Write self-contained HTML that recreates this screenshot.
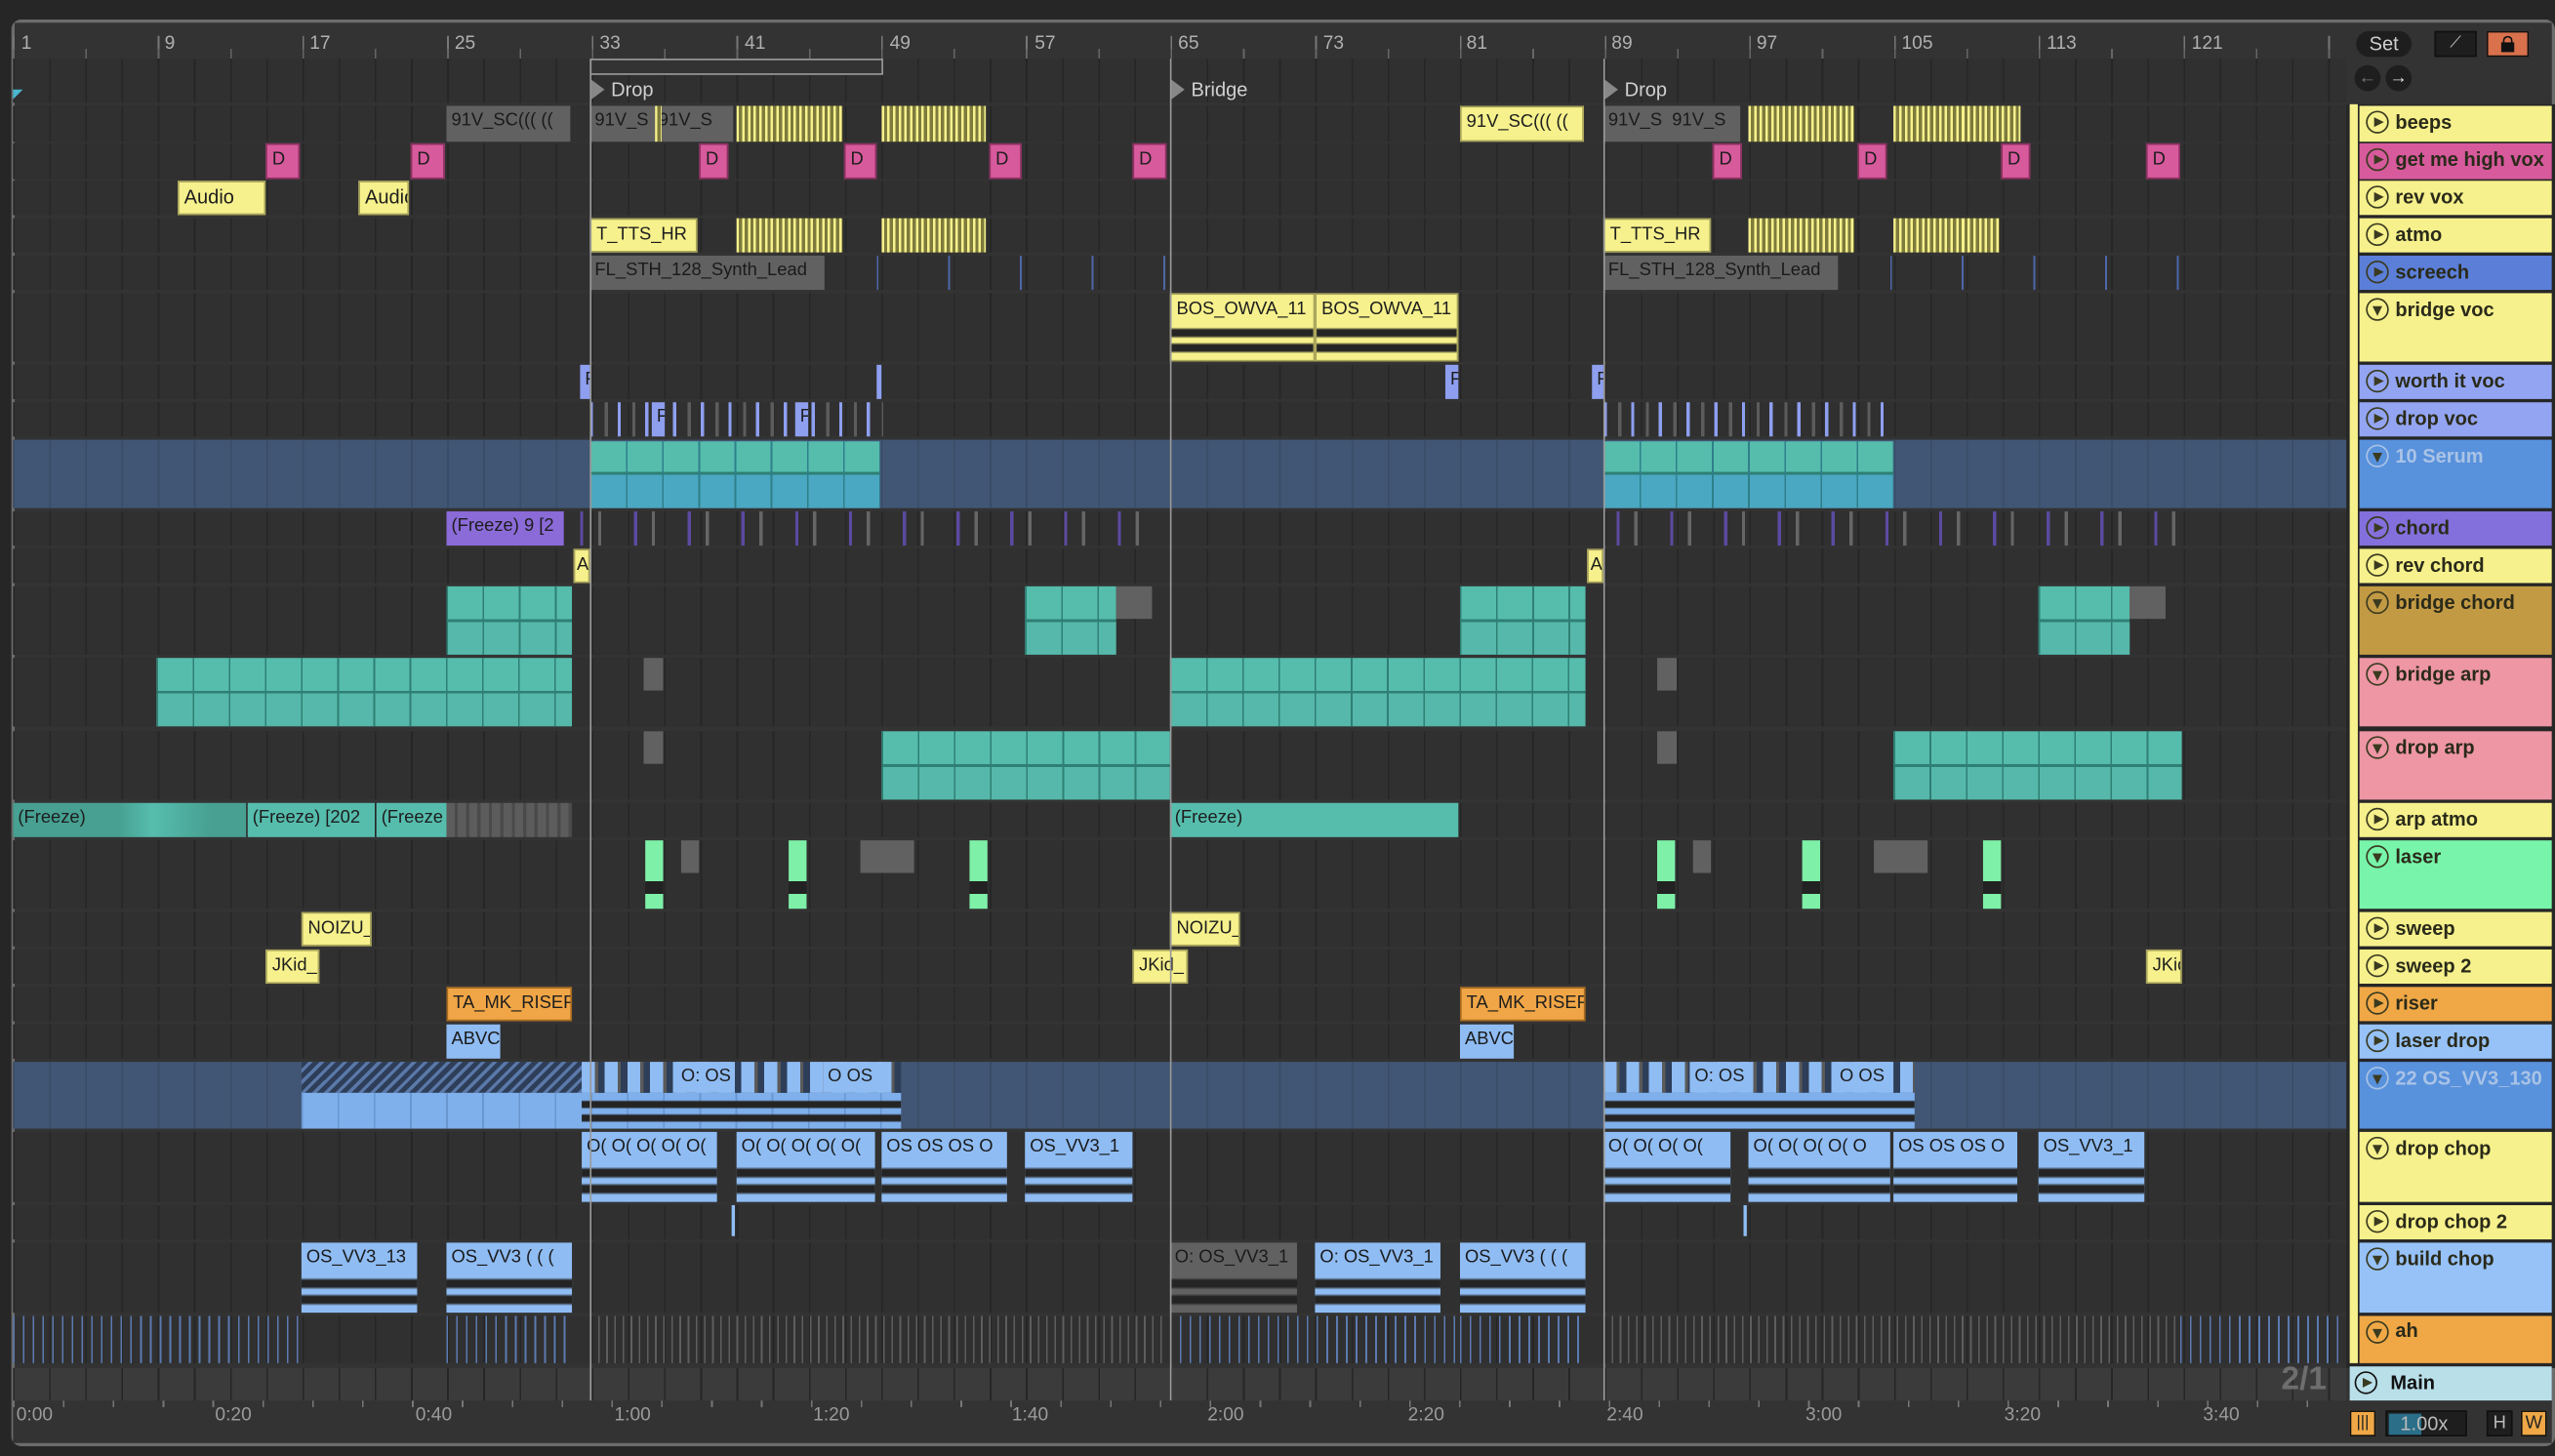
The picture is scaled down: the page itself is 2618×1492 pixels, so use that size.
<!DOCTYPE html>
<html><head><meta charset="utf-8">
<style>
html,body{margin:0;padding:0;background:#262626;width:2618px;height:1492px;overflow:hidden}
#w{position:absolute;left:0;top:0;width:1568px;height:894px;transform:scale(1.66964,1.66890);transform-origin:0 0;font-family:"Liberation Sans",sans-serif;background:#262626}
#w div{position:absolute;box-sizing:border-box}
.ln{left:8px;width:1432px;background-color:#303030;background-image:repeating-linear-gradient(90deg,#262626 0 1px,transparent 1px 22.2px)}
.grp{background-color:#415674!important;background-image:repeating-linear-gradient(90deg,#394c68 0 1px,transparent 1px 22.2px)!important}
.k{overflow:hidden;white-space:nowrap;font-size:11px;color:#1d1d1d;padding-left:3px;line-height:19px}
.y{background:#f6f18c;border:1px solid #a8a35a}
.g{background:#616161;color:#1a1a1a}
.p{background:#d75a9c;border:1px solid #8a3060}
.st{background:repeating-linear-gradient(90deg,#f6f18c 0 1.5px,#7d7a3c 1.5px 3.5px)}
.tl2{background-image:repeating-linear-gradient(90deg,#2f7f74 0 1px,transparent 1px 22.2px),linear-gradient(#56bdad 0 48%,#2f7f74 48% 52%,#55b8aa 52%)}
.tlb{background-image:repeating-linear-gradient(90deg,#2f7f8a 0 1px,transparent 1px 22.2px),linear-gradient(#56bdad 0 46%,#2f7f74 46% 50%,#4aa8c2 50%)}
.lb{background:#8fbcf3;color:#1a1a1a}
.wv{background-image:linear-gradient(transparent 0 50%,#242424 54% 63%,transparent 67% 73%,#242424 77% 86%,transparent 90%)}
.lab{left:1448px;width:118px;font-size:12px;font-weight:bold;color:#2a2a1a;padding-left:22px;line-height:21px}
.lab i{position:absolute;left:4px;top:3px;width:14px;height:14px;border:1.5px solid #3a3a20;border-radius:50%;box-sizing:border-box}
.lab i:after{content:"";position:absolute;left:4px;top:2.5px;border-left:6px solid #3a3a20;border-top:3.5px solid transparent;border-bottom:3.5px solid transparent}
.lab i.d:after{left:2.5px;top:4px;border-top:6px solid #3a3a20;border-left:3.5px solid transparent;border-right:3.5px solid transparent;border-bottom:0}
.rn{font-size:11.5px;color:#b0b0b0;top:21px}
.tm{font-size:11.5px;color:#9a9a9a;top:863px}
.vl{width:1px;background:#9a9a9a;top:36px;height:824px}
</style></head><body><div id="w">
<div style="left:7px;top:12px;width:1561px;height:876px;border:2px solid #6c6c6c;border-radius:6px;background:#333"></div>
<div style="left:9px;top:14px;width:1430px;height:22px;background:#333"></div>
<div style="left:8px;top:22px;width:1432px;height:14px;background-image:repeating-linear-gradient(90deg,#777 0 1px,transparent 1px 88.8px)"></div>
<div style="left:8px;top:30px;width:1432px;height:6px;background-image:repeating-linear-gradient(90deg,#666 0 1px,transparent 1px 44.4px)"></div>
<div class="rn" style="left:13px">1</div><div class="rn" style="left:101px">9</div><div class="rn" style="left:190px">17</div><div class="rn" style="left:279px">25</div><div class="rn" style="left:368px">33</div><div class="rn" style="left:457px">41</div><div class="rn" style="left:546px">49</div><div class="rn" style="left:635px">57</div><div class="rn" style="left:723px">65</div><div class="rn" style="left:812px">73</div><div class="rn" style="left:900px">81</div><div class="rn" style="left:989px">89</div><div class="rn" style="left:1078px">97</div><div class="rn" style="left:1167px">105</div><div class="rn" style="left:1256px">113</div><div class="rn" style="left:1345px">121</div>
<div class="ln" style="top:36px;height:27px"></div>
<div style="left:8px;top:55px;border-left:6px solid #4ab8d0;border-bottom:6px solid transparent;width:0;height:0"></div>
<div style="left:362px;top:36px;width:180px;height:10px;border:1px solid #999;background:#333"></div>
<div style="left:362px;top:48px;font-size:12px;color:#d0d0d0;padding-left:13px">Drop</div>
<div style="left:718px;top:48px;font-size:12px;color:#d0d0d0;padding-left:13px">Bridge</div>
<div style="left:984px;top:48px;font-size:12px;color:#d0d0d0;padding-left:13px">Drop</div>
<div style="left:363px;top:49px;border-left:8px solid #888;border-top:6px solid transparent;border-bottom:6px solid transparent"></div>
<div style="left:719px;top:49px;border-left:8px solid #888;border-top:6px solid transparent;border-bottom:6px solid transparent"></div>
<div style="left:985px;top:49px;border-left:8px solid #888;border-top:6px solid transparent;border-bottom:6px solid transparent"></div>

<div class="ln" style="top:65px;height:22px"></div>
<div class="ln" style="top:88px;height:22px"></div>
<div class="ln" style="top:111px;height:21px"></div>
<div class="ln" style="top:134px;height:21px"></div>
<div class="ln" style="top:157px;height:21px"></div>
<div class="ln" style="top:180px;height:42px"></div>
<div class="ln" style="top:224px;height:21px"></div>
<div class="ln" style="top:247px;height:21px"></div>
<div class="ln grp" style="top:270px;height:42px"></div>
<div class="ln" style="top:314px;height:21px"></div>
<div class="ln" style="top:337px;height:21px"></div>
<div class="ln" style="top:360px;height:42px"></div>
<div class="ln" style="top:404px;height:42px"></div>
<div class="ln" style="top:449px;height:42px"></div>
<div class="ln" style="top:493px;height:21px"></div>
<div class="ln" style="top:516px;height:42px"></div>
<div class="ln" style="top:560px;height:21px"></div>
<div class="ln" style="top:583px;height:21px"></div>
<div class="ln" style="top:606px;height:21px"></div>
<div class="ln" style="top:629px;height:21px"></div>
<div class="ln grp" style="top:652px;height:41px"></div>
<div class="ln" style="top:695px;height:43px"></div>
<div class="ln" style="top:740px;height:21px"></div>
<div class="ln" style="top:763px;height:43px"></div>
<div class="ln" style="top:808px;height:29px"></div>
<div class="ln" style="top:840px;height:20px;background-color:#3b3b3b"></div>
<div style="left:1400px;top:836px;font-size:20px;font-weight:bold;color:#6e6e6e">2/1</div>

<div class="k g" style="left:274px;top:65px;width:76px;height:22px">91V_SC((( ((</div>
<div class="k g" style="left:362px;top:65px;width:88px;height:22px">91V_S&nbsp;&nbsp;91V_S</div>
<div class="st" style="left:402px;top:65px;width:4px;height:22px"></div>
<div class="st" style="left:452px;top:65px;width:65px;height:22px"></div>
<div class="st" style="left:541px;top:65px;width:64px;height:22px"></div>
<div class="k y" style="left:896px;top:65px;width:76px;height:22px">91V_SC((( ((</div>
<div class="k g" style="left:984px;top:65px;width:84px;height:22px">91V_S&nbsp;&nbsp;91V_S</div>
<div class="st" style="left:1073px;top:65px;width:65px;height:22px"></div>
<div class="st" style="left:1162px;top:65px;width:78px;height:22px"></div>
<div class="k p" style="left:163px;top:88px;width:21px;height:22px">D</div>
<div class="k p" style="left:252px;top:88px;width:21px;height:22px">D</div>
<div class="k p" style="left:429px;top:88px;width:18px;height:22px">D</div>
<div class="k p" style="left:518px;top:88px;width:20px;height:22px">D</div>
<div class="k p" style="left:607px;top:88px;width:20px;height:22px">D</div>
<div class="k p" style="left:695px;top:88px;width:21px;height:22px">D</div>
<div class="k p" style="left:1051px;top:88px;width:18px;height:22px">D</div>
<div class="k p" style="left:1140px;top:88px;width:18px;height:22px">D</div>
<div class="k p" style="left:1228px;top:88px;width:18px;height:22px">D</div>
<div class="k p" style="left:1317px;top:88px;width:21px;height:22px">D</div>
<div class="k y" style="left:109px;top:111px;width:54px;height:21px;font-size:12px">Audio</div>
<div class="k y" style="left:220px;top:111px;width:31px;height:21px;font-size:12px">Audio</div>
<div class="k y" style="left:362px;top:134px;width:66px;height:21px">T_TTS_HR</div>
<div class="st" style="left:452px;top:134px;width:65px;height:21px"></div>
<div class="st" style="left:541px;top:134px;width:64px;height:21px"></div>
<div class="k y" style="left:984px;top:134px;width:66px;height:21px">T_TTS_HR</div>
<div class="st" style="left:1073px;top:134px;width:65px;height:21px"></div>
<div class="st" style="left:1162px;top:134px;width:65px;height:21px"></div>
<div class="k g" style="left:362px;top:157px;width:144px;height:21px">FL_STH_128_Synth_Lead</div>
<div style="left:508px;top:157px;width:208px;height:21px;background-image:repeating-linear-gradient(90deg,transparent 0 30px,#4d66a8 30px 31px,transparent 31px 44px)"></div>
<div class="k g" style="left:984px;top:157px;width:144px;height:21px">FL_STH_128_Synth_Lead</div>
<div style="left:1130px;top:157px;width:208px;height:21px;background-image:repeating-linear-gradient(90deg,transparent 0 30px,#4d66a8 30px 31px,transparent 31px 44px)"></div>
<div class="k y wv" style="left:718px;top:180px;width:89px;height:42px">BOS_OWVA_11</div>
<div class="k y wv" style="left:807px;top:180px;width:88px;height:42px">BOS_OWVA_11</div>
<div class="k" style="left:356px;top:224px;width:6px;height:21px;background:#8e9ff0">F</div>
<div style="left:538px;top:224px;width:3px;height:21px;background:#8e9ff0"></div>
<div class="k" style="left:887px;top:224px;width:8px;height:21px;background:#8e9ff0">F</div>
<div class="k" style="left:977px;top:224px;width:7px;height:21px;background:#8e9ff0">F</div>
<div style="left:362px;top:247px;width:180px;height:21px;background-image:repeating-linear-gradient(90deg,#8e9ff0 0 2px,transparent 2px 9px,#5c5c5c 9px 11px,transparent 11px 17px)"></div>
<div class="k" style="left:400px;top:247px;width:8px;height:21px;background:#8e9ff0">F</div>
<div class="k" style="left:488px;top:247px;width:8px;height:21px;background:#8e9ff0">F</div>
<div style="left:984px;top:247px;width:176px;height:21px;background-image:repeating-linear-gradient(90deg,#8e9ff0 0 2px,transparent 2px 9px,#5c5c5c 9px 11px,transparent 11px 17px)"></div>
<div class="tlb" style="left:362px;top:271px;width:178px;height:41px"></div>
<div class="tlb" style="left:984px;top:271px;width:178px;height:41px"></div>
<div class="k" style="left:274px;top:314px;width:72px;height:21px;background:#8b6bd8">(Freeze) 9 [2</div>
<div style="left:348px;top:314px;width:368px;height:21px;background-image:repeating-linear-gradient(90deg,transparent 0 8px,#5b4aa0 8px 10px,transparent 10px 19px,#666 19px 21px,transparent 21px 33px)"></div>
<div style="left:984px;top:314px;width:354px;height:21px;background-image:repeating-linear-gradient(90deg,transparent 0 8px,#5b4aa0 8px 10px,transparent 10px 19px,#666 19px 21px,transparent 21px 33px)"></div>
<div class="k y" style="left:352px;top:337px;width:10px;height:21px;padding-left:1px">A</div>
<div class="k y" style="left:974px;top:337px;width:10px;height:21px;padding-left:1px">A</div>
<div class="tl2" style="left:274px;top:360px;width:77px;height:42px"></div>
<div class="tl2" style="left:629px;top:360px;width:56px;height:42px"></div>
<div class="g" style="left:685px;top:360px;width:22px;height:20px"></div>
<div class="tl2" style="left:896px;top:360px;width:77px;height:42px"></div>
<div class="tl2" style="left:1251px;top:360px;width:56px;height:42px"></div>
<div class="g" style="left:1307px;top:360px;width:22px;height:20px"></div>
<div class="tl2" style="left:96px;top:404px;width:255px;height:42px"></div>
<div class="g" style="left:395px;top:404px;width:12px;height:20px"></div>
<div class="tl2" style="left:718px;top:404px;width:255px;height:42px"></div>
<div class="g" style="left:1017px;top:404px;width:12px;height:20px"></div>
<div class="g" style="left:395px;top:449px;width:12px;height:20px"></div>
<div class="tl2" style="left:541px;top:449px;width:177px;height:42px"></div>
<div class="g" style="left:1017px;top:449px;width:12px;height:20px"></div>
<div class="tl2" style="left:1162px;top:449px;width:177px;height:42px"></div>
<div class="k" style="left:8px;top:493px;width:143px;height:21px;background:linear-gradient(90deg,#47a092 0 45%,#56bdad 60%,#47a092 85%)">(Freeze)</div>
<div class="k" style="left:152px;top:493px;width:78px;height:21px;background:#56bdad">(Freeze) [202</div>
<div class="k" style="left:231px;top:493px;width:43px;height:21px;background:#56bdad">(Freeze</div>
<div style="left:274px;top:493px;width:77px;height:21px;background:repeating-linear-gradient(90deg,#5c5c5c 0 5px,#4a4a4a 5px 7px)"></div>
<div class="k" style="left:718px;top:493px;width:177px;height:21px;background:#56bdad">(Freeze)</div>
<div style="left:396px;top:516px;width:11px;height:42px;background:linear-gradient(#7ef0a8 0 60%,#222 60% 78%,#7ef0a8 78%)"></div>
<div style="left:484px;top:516px;width:11px;height:42px;background:linear-gradient(#7ef0a8 0 60%,#222 60% 78%,#7ef0a8 78%)"></div>
<div style="left:595px;top:516px;width:11px;height:42px;background:linear-gradient(#7ef0a8 0 60%,#222 60% 78%,#7ef0a8 78%)"></div>
<div class="g" style="left:418px;top:516px;width:11px;height:20px"></div>
<div class="g" style="left:528px;top:516px;width:33px;height:20px"></div>
<div class="g" style="left:1039px;top:516px;width:11px;height:20px"></div>
<div class="g" style="left:1150px;top:516px;width:33px;height:20px"></div>
<div style="left:1017px;top:516px;width:11px;height:42px;background:linear-gradient(#7ef0a8 0 60%,#222 60% 78%,#7ef0a8 78%)"></div>
<div style="left:1106px;top:516px;width:11px;height:42px;background:linear-gradient(#7ef0a8 0 60%,#222 60% 78%,#7ef0a8 78%)"></div>
<div style="left:1217px;top:516px;width:11px;height:42px;background:linear-gradient(#7ef0a8 0 60%,#222 60% 78%,#7ef0a8 78%)"></div>
<div class="k y" style="left:185px;top:560px;width:43px;height:21px">NOIZU_</div>
<div class="k y" style="left:718px;top:560px;width:43px;height:21px">NOIZU_</div>
<div class="k y" style="left:163px;top:583px;width:33px;height:21px">JKid_</div>
<div class="k y" style="left:695px;top:583px;width:34px;height:21px">JKid_</div>
<div class="k y" style="left:1317px;top:583px;width:22px;height:21px">JKid</div>
<div class="k" style="left:274px;top:606px;width:77px;height:21px;background:#f0a646;border:1px solid #a86a20">TA_MK_RISER</div>
<div class="k" style="left:896px;top:606px;width:77px;height:21px;background:#f0a646;border:1px solid #a86a20">TA_MK_RISER</div>
<div class="k lb" style="left:274px;top:629px;width:33px;height:21px">ABVC</div>
<div class="k lb" style="left:896px;top:629px;width:33px;height:21px">ABVC</div>
<div style="left:185px;top:652px;width:172px;height:19px;background:repeating-linear-gradient(135deg,#2e3e58 0 3px,#5a78a8 3px 5px)"></div>
<div style="left:185px;top:671px;width:368px;height:22px;background-color:#7fb0ec;background-image:repeating-linear-gradient(90deg,#6a96d0 0 1px,transparent 1px 22.2px)"></div>
<div style="left:357px;top:652px;width:196px;height:19px;background:repeating-linear-gradient(90deg,#8fbcf3 0 8px,#5a5a5a 8px 10px,#2e3e58 10px 14px)"></div>
<div class="k" style="left:415px;top:652px;width:36px;height:19px;background:#8fbcf3">O: OS</div>
<div class="k" style="left:505px;top:652px;width:36px;height:19px;background:#8fbcf3">O OS</div>
<div class="wv" style="left:357px;top:671px;width:196px;height:22px;background-image:linear-gradient(transparent 0 20%,#242424 25% 40%,transparent 45% 58%,#242424 63% 78%,transparent 83%)"></div>
<div style="left:984px;top:652px;width:191px;height:19px;background:repeating-linear-gradient(90deg,#8fbcf3 0 8px,#5a5a5a 8px 10px,#2e3e58 10px 14px)"></div>
<div class="k" style="left:1037px;top:652px;width:36px;height:19px;background:#8fbcf3">O: OS</div>
<div class="k" style="left:1126px;top:652px;width:36px;height:19px;background:#8fbcf3">O OS</div>
<div style="left:984px;top:671px;width:191px;height:22px;background-color:#7fb0ec;background-image:linear-gradient(transparent 0 20%,#242424 25% 40%,transparent 45% 58%,#242424 63% 78%,transparent 83%)"></div>
<div class="k lb wv" style="left:357px;top:695px;width:83px;height:43px">O( O( O( O( O(</div>
<div class="k lb wv" style="left:452px;top:695px;width:85px;height:43px">O( O( O( O( O(</div>
<div class="k lb wv" style="left:541px;top:695px;width:77px;height:43px">OS OS OS O</div>
<div class="k lb wv" style="left:629px;top:695px;width:66px;height:43px">OS_VV3_1</div>
<div class="k lb wv" style="left:984px;top:695px;width:78px;height:43px">O( O( O( O(</div>
<div class="k lb wv" style="left:1073px;top:695px;width:87px;height:43px">O( O( O( O( O</div>
<div class="k lb wv" style="left:1162px;top:695px;width:76px;height:43px">OS OS OS O</div>
<div class="k lb wv" style="left:1251px;top:695px;width:65px;height:43px">OS_VV3_1</div>
<div style="left:449px;top:740px;width:2px;height:19px;background:#8fbcf3"></div>
<div style="left:1070px;top:740px;width:2px;height:19px;background:#8fbcf3"></div>
<div class="k lb wv" style="left:185px;top:763px;width:71px;height:43px">OS_VV3_13</div>
<div class="k lb wv" style="left:274px;top:763px;width:77px;height:43px">OS_VV3 ( ( (</div>
<div class="k g wv" style="left:718px;top:763px;width:78px;height:43px">O: OS_VV3_1</div>
<div class="k lb wv" style="left:807px;top:763px;width:77px;height:43px">O: OS_VV3_1</div>
<div class="k lb wv" style="left:896px;top:763px;width:77px;height:43px">OS_VV3 ( ( (</div>
<div style="left:8px;top:808px;width:176px;height:29px;background:repeating-linear-gradient(90deg,#5b7ab0 0 1px,transparent 1px 6px)"></div>
<div style="left:274px;top:808px;width:77px;height:29px;background:repeating-linear-gradient(90deg,#5b7ab0 0 1px,transparent 1px 6px)"></div>
<div style="left:362px;top:808px;width:354px;height:29px;background:repeating-linear-gradient(90deg,#5e5e5e 0 1px,transparent 1px 5px)"></div>
<div style="left:718px;top:808px;width:178px;height:29px;background:repeating-linear-gradient(90deg,#5b7ab0 0 1px,transparent 1px 6px)"></div>
<div style="left:896px;top:808px;width:77px;height:29px;background:repeating-linear-gradient(90deg,#5b7ab0 0 1px,transparent 1px 6px)"></div>
<div style="left:984px;top:808px;width:354px;height:29px;background:repeating-linear-gradient(90deg,#5e5e5e 0 1px,transparent 1px 5px)"></div>
<div style="left:1338px;top:808px;width:100px;height:29px;background:repeating-linear-gradient(90deg,#5b7ab0 0 1px,transparent 1px 6px)"></div>
<div class="vl" style="left:362px"></div>
<div class="vl" style="left:718px"></div>
<div class="vl" style="left:984px"></div>
<div style="left:8px;top:860px;width:1432px;height:26px;background:#333"></div>
<div style="left:8px;top:860px;width:1432px;height:4px;background-image:repeating-linear-gradient(90deg,#777 0 1px,transparent 1px 30.6px)"></div>
<div class="tm" style="left:10px">0:00</div><div class="tm" style="left:132px">0:20</div><div class="tm" style="left:255px">0:40</div><div class="tm" style="left:377px">1:00</div><div class="tm" style="left:499px">1:20</div><div class="tm" style="left:621px">1:40</div><div class="tm" style="left:741px">2:00</div><div class="tm" style="left:864px">2:20</div><div class="tm" style="left:986px">2:40</div><div class="tm" style="left:1108px">3:00</div><div class="tm" style="left:1230px">3:20</div><div class="tm" style="left:1352px">3:40</div>
<div style="left:1440px;top:14px;width:126px;height:50px;background:#333"></div>
<div style="left:1446px;top:19px;width:34px;height:16px;background:#1e1e1e;border-radius:8px;color:#cfcfcf;font-size:12px;text-align:center;line-height:16px">Set</div>
<div style="left:1494px;top:19px;width:26px;height:16px;background:#1e1e1e;border:1px solid #111;color:#ccc;font-size:10px;text-align:center;line-height:14px">⟋</div>
<div style="left:1526px;top:19px;width:26px;height:16px;background:#d9714c;border:1px solid #111"></div>
<div style="left:1535px;top:26px;width:8px;height:6px;background:#111"></div>
<div style="left:1536px;top:22px;width:6px;height:6px;border:1.5px solid #111;border-bottom:0;border-radius:3px 3px 0 0"></div>
<div style="left:1445px;top:40px;width:16px;height:16px;border-radius:50%;background:#1e1e1e;color:#777;font-size:11px;text-align:center;line-height:16px">←</div>
<div style="left:1464px;top:40px;width:16px;height:16px;border-radius:50%;background:#1e1e1e;color:#ddd;font-size:11px;text-align:center;line-height:16px">→</div>
<div style="left:1440px;top:64px;width:128px;height:776px;background:#262626"></div>
<div style="left:1442px;top:64px;width:5px;height:773px;background:#f6f18c"></div>
<div class="lab" style="top:65px;height:22px;background:#f6f18c"><i></i>beeps</div>
<div class="lab" style="top:88px;height:22px;background:#d75a9c"><i></i>get me high vox</div>
<div class="lab" style="top:111px;height:21px;background:#f6f18c"><i></i>rev vox</div>
<div class="lab" style="top:134px;height:21px;background:#f6f18c"><i></i>atmo</div>
<div class="lab" style="top:157px;height:21px;background:#5b7fd8"><i></i>screech</div>
<div class="lab" style="top:180px;height:42px;background:#f6f18c"><i class="d"></i>bridge voc</div>
<div class="lab" style="top:224px;height:21px;background:#93a5f2"><i></i>worth it voc</div>
<div class="lab" style="top:247px;height:21px;background:#93a5f2"><i></i>drop voc</div>
<div class="lab" style="top:270px;height:42px;background:#5891dc;color:#a9c3e6"><i class="d" style="border-color:#a9c3e6"></i>10 Serum</div>
<div class="lab" style="top:314px;height:21px;background:#8470dc"><i></i>chord</div>
<div class="lab" style="top:337px;height:21px;background:#f6f18c"><i></i>rev chord</div>
<div class="lab" style="top:360px;height:42px;background:#c29a44"><i class="d"></i>bridge chord</div>
<div class="lab" style="top:404px;height:42px;background:#ee96a4"><i class="d"></i>bridge arp</div>
<div class="lab" style="top:449px;height:42px;background:#ee96a4"><i class="d"></i>drop arp</div>
<div class="lab" style="top:493px;height:21px;background:#f6f18c"><i></i>arp atmo</div>
<div class="lab" style="top:516px;height:42px;background:#78f5aa"><i class="d"></i>laser</div>
<div class="lab" style="top:560px;height:21px;background:#f6f18c"><i></i>sweep</div>
<div class="lab" style="top:583px;height:21px;background:#f6f18c"><i></i>sweep 2</div>
<div class="lab" style="top:606px;height:21px;background:#f0a846"><i></i>riser</div>
<div class="lab" style="top:629px;height:21px;background:#96c2f8"><i></i>laser drop</div>
<div class="lab" style="top:652px;height:41px;background:#5891dc;color:#a9c3e6;overflow:hidden;white-space:nowrap"><i class="d" style="border-color:#a9c3e6"></i>22 OS_VV3_130</div>
<div class="lab" style="top:695px;height:43px;background:#f6f18c"><i class="d"></i>drop chop</div>
<div class="lab" style="top:740px;height:21px;background:#f6f18c"><i></i>drop chop 2</div>
<div class="lab" style="top:763px;height:43px;background:#96c2f8"><i class="d"></i>build chop</div>
<div class="lab" style="top:808px;height:29px;background:#f0a846;line-height:18px"><i class="d"></i>ah</div>
<div class="lab" style="left:1442px;width:124px;top:839px;height:21px;background:#b9dfe9;color:#111;padding-left:25px"><i style="border-color:#111;left:3px"></i>Main</div>
<div style="left:1440px;top:860px;width:126px;height:26px;background:#333"></div>
<div style="left:1442px;top:866px;width:16px;height:16px;background:#f0a846;border:1px solid #111;font-size:10px;text-align:center;color:#222;line-height:14px">|||</div>
<div style="left:1464px;top:866px;width:50px;height:16px;background:#1e1e1e;border:1px solid #111;font-size:12px;color:#bbb;line-height:14px;padding-left:8px"><span style="position:absolute;left:1px;top:1px;width:20px;height:13px;background:#2a6e88"></span><span style="position:relative">1.00x</span></div>
<div style="left:1526px;top:866px;width:16px;height:16px;background:#1e1e1e;border:1px solid #111;font-size:11px;color:#bbb;text-align:center;line-height:14px">H</div>
<div style="left:1547px;top:866px;width:16px;height:16px;background:#f0a846;border:1px solid #111;font-size:11px;color:#222;text-align:center;line-height:14px">W</div>
</div></body></html>
